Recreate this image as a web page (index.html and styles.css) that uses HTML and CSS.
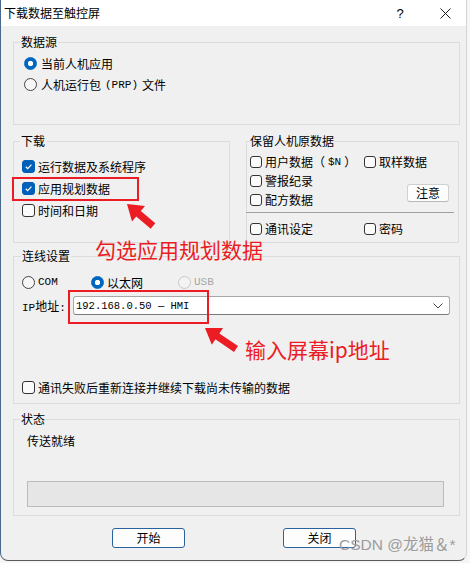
FILE: index.html
```html
<!DOCTYPE html>
<html lang="zh-CN">
<head>
<meta charset="utf-8">
<title>下载数据至触控屏</title>
<link rel="stylesheet" href="styles.css">
</head>
<body>
<div class="window">
  <div class="titlebar">
    <span class="title">下载数据至触控屏</span>
    <span class="help">?</span>
    <svg class="close" width="11" height="11" viewBox="0 0 11 11"><path d="M0.5 0.5L10.5 10.5M10.5 0.5L0.5 10.5" stroke="#1a1a1a" stroke-width="1" fill="none"/></svg>
  </div>
  <div class="client">
    <fieldset class="group g-source">
      <legend>数据源</legend>
      <div class="stack">
        <label class="opt"><span class="radio on"></span>当前人机应用</label>
        <label class="opt"><span class="radio"></span>人机运行包<span class="mono">(PRP)</span>文件</label>
      </div>
    </fieldset>

    <div class="row2">
      <fieldset class="group g-download">
        <legend>下载</legend>
        <div class="stack">
          <label class="opt chk"><span class="check on"><svg viewBox="0 0 12 12"><path d="M3 6.3L5.1 8.4L9.2 3.9" stroke="#fff" stroke-width="1.3" fill="none"/></svg></span>运行数据及系统程序</label>
          <label class="opt chk"><span class="check on"><svg viewBox="0 0 12 12"><path d="M3 6.3L5.1 8.4L9.2 3.9" stroke="#fff" stroke-width="1.3" fill="none"/></svg></span>应用规划数据</label>
          <label class="opt chk"><span class="check"></span>时间和日期</label>
        </div>
      </fieldset>
      <fieldset class="group g-keep">
        <legend>保留人机原数据</legend>
        <div class="keep-grid">
          <label class="opt k"><span class="check"></span>用户数据（<span class="mono">$N</span>）</label>
          <label class="opt k"><span class="check"></span>取样数据</label>
          <label class="opt k"><span class="check"></span>警报纪录</label>
          <button class="btn-note" type="button">注意</button>
          <label class="opt k"><span class="check"></span>配方数据</label>
        </div>
        <div class="sep"></div>
        <div class="keep-grid last">
          <label class="opt k"><span class="check"></span>通讯设定</label>
          <label class="opt k"><span class="check"></span>密码</label>
        </div>
      </fieldset>
    </div>

    <fieldset class="group g-conn">
      <legend>连线设置</legend>
      <div class="radios">
        <label class="opt w-com"><span class="radio"></span><span class="mono">COM</span></label>
        <label class="opt w-eth"><span class="radio on"></span>以太网</label>
        <label class="opt disabled"><span class="radio"></span><span class="mono">USB</span></label>
      </div>
      <div class="ip-row">
        <span class="ip-label"><span class="mono">IP</span>地址<span class="mono">:</span></span>
        <div class="combo">
          <span class="mono combo-text">192.168.0.50 — HMI</span>
          <svg class="chev" width="10" height="6" viewBox="0 0 10 6"><path d="M0.5 0.5L5 5L9.5 0.5" stroke="#444" stroke-width="1" fill="none"/></svg>
        </div>
      </div>
      <label class="opt chk retry"><span class="check"></span>通讯失败后重新连接并继续下载尚未传输的数据</label>
    </fieldset>

    <fieldset class="group g-status">
      <legend>状态</legend>
      <div class="status-text">传送就绪</div>
      <div class="progress"></div>
    </fieldset>

    <div class="buttons">
      <button class="btn" type="button">开始</button>
      <button class="btn" type="button">关闭</button>
    </div>
  </div>
</div>

<div class="annot">
  <div class="redbox box1"></div>
  <div class="redbox box2"></div>
  <div class="note note1">勾选应用规划数据</div>
  <div class="note note2">输入屏幕ip地址</div>
  <svg class="arrows" width="470" height="563" viewBox="0 0 470 563">
    <polygon fill="#ec1c24" points="127,204 145,206 140.8,211 155.3,223.3 150.7,228.7 136.2,216.4 132,221.4"/>
    <polygon fill="#ec1c24" points="205,328 223,328.1 219.4,333.5 238,346.1 234,351.9 215.4,339.3 211.8,344.7"/>
  </svg>
  <div class="watermark">CSDN @龙猫＆*</div>
</div>
</body>
</html>
```

FILE: styles.css
```css
* { box-sizing: border-box; }
html, body { margin: 0; padding: 0; }
body {
  position: relative;
  width: 470px;
  height: 563px;
  overflow: hidden;
  background: #f6f6f6;
  font-family: "Noto Sans CJK SC", "Microsoft YaHei", sans-serif;
  font-size: 12px;
  color: #000;
}
.mono { font-family: "Liberation Mono", "DejaVu Sans Mono", monospace; font-size: 11px; }

.window {
  width: 467px;
  height: 561px;
  background: #f0f0f0;
  border-left: 1px solid #46698c;
  border-right: 1px solid #d4d4d4;
  border-bottom: 1px solid #5a5a5a;
  border-radius: 0 0 8px 8px;
  overflow: hidden;
}
.titlebar {
  height: 26px;
  background: #fff;
  display: flex;
  align-items: center;
  padding-left: 3px;
}
.title { flex: 1; line-height: 26px; font-size: 12px; }
.help {
  width: 8px;
  text-align: center;
  font-family: "Liberation Sans", sans-serif;
  font-size: 13px;
  margin-right: 36px;
}
.close { margin-right: 15px; }

.client {
  padding-left: 12px;
  display: flex;
  flex-direction: column;
  align-items: flex-start;
}
.group {
  margin: 0;
  border: 1px solid #dcdcdc;
  padding: 0 8px;
  min-inline-size: 0;
}
.group legend {
  padding: 0 1px;
  margin-left: -2px;
  line-height: 14px;
  font-size: 12px;
}
.opt {
  display: flex;
  align-items: center;
  gap: 4px;
  white-space: nowrap;
}
.radio {
  flex: none;
  width: 13px;
  height: 13px;
  border-radius: 50%;
  border: 1px solid #444;
  background: #f7f7f7;
}
.radio.on {
  border-color: #0067c0;
  background: radial-gradient(circle, #fff 0 2.4px, #0067c0 3px);
}
.check {
  flex: none;
  width: 13px;
  height: 13px;
  border: 1px solid #333;
  border-radius: 3px;
  background: #fbfbfb;
  display: flex;
}
.check svg { width: 11px; height: 11px; }
.check.on { background: #005fb8; border-color: #005fb8; }
.chk { gap: 3px; }

/* 数据源 */
.g-source { width: 447px; height: 90px; margin-top: 9px; }
.g-source .stack { padding-top: 4px; padding-left: 2px; }
.g-source .opt { height: 21px; }

/* row of two groups */
.row2 { display: flex; gap: 16px; margin-top: 9px; height: 109px; }
.g-download { width: 217px; height: 109px; }
.g-download .stack { padding-top: 7px; }
.g-download .opt { height: 22px; }

.g-keep { width: 213px; height: 109px; padding: 0 9px 0 3px; }
.g-keep legend { margin-left: 0; padding: 0; }
.keep-grid {
  display: grid;
  grid-template-columns: 114px 1fr;
  grid-auto-rows: 19px;
  padding-top: 4px;
}
.keep-grid.last { padding-top: 6px; }
.opt.k { gap: 3px; }
.opt.k .check { width: 12px; height: 12px; }
.btn-note {
  grid-column: 2;
  grid-row: 2 / span 2;
  justify-self: end;
  align-self: start;
  margin-top: 13px;
  width: 42px;
  height: 18px;
  padding: 0;
  border: 1px solid #d0d0d0;
  border-bottom-color: #b8b8b8;
  border-radius: 3px;
  background: #fdfdfd;
  font: inherit;
  line-height: 16px;
  color: #000;
}
.sep { height: 1px; background: #a0a0a0; margin: 3px -5px 0 -4px; }

/* 连线设置 */
.g-conn { width: 447px; height: 155px; margin-top: 6px; }
.g-conn legend { margin-left: -1px; }
.radios { display: flex; padding-top: 9px; height: 29px; }
.radios .opt { height: 20px; gap: 3px; }
.w-com { width: 69px; }
.w-eth { width: 87px; gap: 4px; }
.opt.disabled { color: #a6a6a6; }
.opt.disabled .radio { border-color: #c8c8c8; background: #f3f3f3; }
.ip-row { display: flex; align-items: center; margin-top: 4px; height: 19px; }
.ip-label { width: 51px; flex: none; }
.combo {
  width: 377px;
  height: 19px;
  display: flex;
  align-items: center;
  background: #fff;
  border: 1px solid #a8a8a8;
  border-bottom-color: #7a7a7a;
  border-radius: 3px;
  padding: 0 6px 0 2px;
}
.combo-text { flex: 1; font-size: 10.5px; }
.retry { height: 20px; margin-top: 62px; }

/* 状态 */
.g-status { width: 447px; height: 104px; margin-top: 8px; }
.status-text { padding: 5px 0 0 5px; line-height: 20px; height: 25px; }
.progress {
  margin: 30px 0 0 5px;
  width: 417px;
  height: 26px;
  border: 1px solid #bcbcbc;
  background: #e6e6e6;
}

.buttons { display: flex; gap: 98px; margin-top: 12px; padding-left: 99px; }
.btn {
  width: 73px;
  height: 20px;
  padding: 0;
  border: 1px solid #2a62a0;
  border-radius: 3px;
  background: #fdfdfd;
  font: inherit;
  line-height: 18px;
  color: #000;
}

/* annotations */
.annot { position: absolute; left: 0; top: 0; width: 470px; height: 563px; pointer-events: none; }
.redbox { position: absolute; border: 2px solid #ec1c24; }
.box1 { left: 12px; top: 177px; width: 127px; height: 24px; }
.box2 { left: 68px; top: 290px; width: 141px; height: 34px; }
.note {
  position: absolute;
  color: #ec1c24;
  font-size: 21px;
  line-height: 21px;
  white-space: nowrap;
}
.note1 { left: 95px; top: 239px; }
.note2 { left: 245px; top: 339px; }
.arrows { position: absolute; left: 0; top: 0; }
.watermark {
  position: absolute;
  left: 339px;
  top: 536px;
  font-family: "Liberation Sans", "Noto Sans CJK SC", sans-serif;
  font-size: 15.5px;
  line-height: 18px;
  color: #9c9c9c;
  white-space: nowrap;
}
```
